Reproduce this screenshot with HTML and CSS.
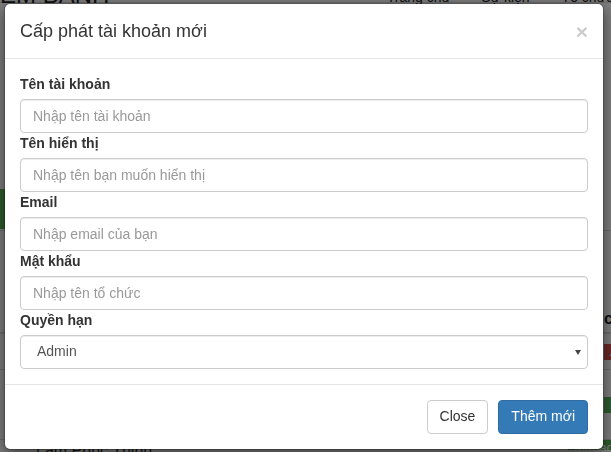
FILE: index.html
```html
<!DOCTYPE html>
<html lang="vi">
<head>
<meta charset="utf-8">
<title>Cấp phát tài khoản mới</title>
<link rel="stylesheet" href="styles.css">
</head>
<body>
<div class="page">
  <header class="navbar">
    <span class="brand">EM BANH</span>
    <nav class="nav">
      <span>Trang chủ</span>
      <span>Sự kiện</span>
      <span>Tổ chức</span>
    </nav>
  </header>
  <main class="content">
    <div class="row row-a"><span class="tag tag-green wide"></span><span></span></div>
    <div class="row row-b"><span></span><span class="th">chức năng</span></div>
    <div class="row row-c"><span></span><span class="tag tag-red">Admin</span></div>
    <div class="row row-d"><span></span><span class="tag tag-green">Manager</span></div>
    <div class="row row-e"><span class="cell-text">Lâm Phúc Thịnh</span><span class="tag tag-green">Manager</span></div>
  </main>
</div>

<div class="backdrop"></div>

<div class="modal">
  <div class="modal-header">
    <h4 class="modal-title">Cấp phát tài khoản mới</h4>
    <button type="button" class="close">×</button>
  </div>
  <form class="modal-body">
    <div class="form-group">
      <label>Tên tài khoản</label>
      <input class="form-control" type="text" placeholder="Nhập tên tài khoản">
    </div>
    <div class="form-group">
      <label>Tên hiển thị</label>
      <input class="form-control" type="text" placeholder="Nhập tên bạn muốn hiển thị">
    </div>
    <div class="form-group">
      <label>Email</label>
      <input class="form-control" type="text" placeholder="Nhập email của bạn">
    </div>
    <div class="form-group">
      <label>Mật khẩu</label>
      <input class="form-control" type="text" placeholder="Nhập tên tổ chức">
    </div>
    <div class="form-group">
      <label>Quyền hạn</label>
      <div class="select-wrap">
        <select class="form-control select">
          <option>Admin</option>
          <option>Manager</option>
        </select>
      </div>
    </div>
  </form>
  <div class="modal-footer">
    <button type="button" class="btn btn-default">Close</button>
    <button type="button" class="btn btn-primary">Thêm mới</button>
  </div>
</div>
</body>
</html>
```

FILE: styles.css
```css
* { box-sizing: border-box; }

html, body {
  margin: 0;
  padding: 0;
  width: 611px;
  height: 452px;
  overflow: hidden;
}

body {
  font-family: "Liberation Sans", Arial, Helvetica, sans-serif;
  font-size: 14px;
  line-height: 1.42857;
  color: #333;
  background: #fff;
  position: relative;
}

/* ---------- background page ---------- */
.page {
  width: 611px;
  height: 452px;
  overflow: hidden;
}

.navbar {
  height: 50px;
  margin-top: -47px;
  background: #f8f8f8;
  border-bottom: 1px solid #d8d8d8;
  display: flex;
  align-items: flex-end;
}

.brand {
  font-size: 24px;
  line-height: 24px;
  margin-bottom: -5px;
  color: #222;
  white-space: nowrap;
}

.nav {
  display: flex;
  gap: 32px;
  margin-left: auto;
  margin-right: -2px;
  font-size: 14px;
  line-height: 20px;
  margin-bottom: -5px;
  color: #222;
  white-space: nowrap;
}

.content {
  display: flex;
  flex-direction: column;
}

.row {
  display: grid;
  grid-template-columns: 604px 1fr;
  align-items: center;
  border-bottom: 1px solid #ddd;
  white-space: nowrap;
}

.row-a { margin-top: 184px; height: 44px; }
.row-b { margin-top: 75px; height: 28px; border-bottom: 2px solid #ddd; }
.row-c { height: 36px; }
.row-d { height: 70px; }
.row-e { height: 52px; align-items: flex-start; }

.th {
  font-weight: bold;
  font-size: 16px;
  color: #222;
}

.tag {
  display: inline-block;
  color: #fff;
  font-size: 13px;
  line-height: 16px;
  padding: 0 6px;
  white-space: nowrap;
}

.tag-green { background: #5cb85c; }
.tag-red { background: #d9534f; }

.wide {
  width: 60px;
  height: 40px;
}

.row-e .tag { margin-left: -36px; height: 10px; }
.cell-text { padding-left: 36px; font-size: 16px; }

.backdrop {
  position: fixed;
  inset: 0;
  background: rgba(0, 0, 0, 0.5);
}

/* ---------- modal ---------- */
.modal {
  position: absolute;
  top: 3px;
  left: 4px;
  width: 600px;
  background: #fff;
  border: 1px solid rgba(0, 0, 0, 0.2);
  border-radius: 6px;
  box-shadow: 0 5px 15px rgba(0, 0, 0, 0.5);
  background-clip: padding-box;
}

.modal-header {
  display: flex;
  align-items: flex-start;
  padding: 15px;
  border-bottom: 1px solid #e5e5e5;
}

.modal-title {
  margin: 0;
  font-size: 18px;
  font-weight: normal;
  line-height: 24px;
  color: #333;
  flex: 1;
}

.close {
  margin: 2px 0 0;
  padding: 0;
  border: 0;
  background: transparent;
  font-family: "Liberation Sans", Arial, sans-serif;
  font-size: 21px;
  font-weight: bold;
  line-height: 1;
  color: #000;
  opacity: 0.2;
  text-shadow: 0 1px 0 #fff;
}

.modal-body {
  margin: 0;
  padding: 15px;
  display: flex;
  flex-direction: column;
}

.form-group label {
  display: block;
  font-weight: bold;
  line-height: 20px;
  margin-bottom: 5px;
  color: #333;
}

.form-control {
  display: block;
  width: 100%;
  height: 34px;
  padding: 6px 12px;
  font-family: "Liberation Sans", Arial, sans-serif;
  font-size: 14px;
  line-height: 1.42857;
  color: #555;
  background: #fff;
  border: 1px solid #ccc;
  border-radius: 4px;
  box-shadow: inset 0 1px 1px rgba(0, 0, 0, 0.075);
  margin: 0;
}

.form-control::placeholder {
  color: #999;
  opacity: 1;
}

.select-wrap {
  position: relative;
}

.select {
  appearance: none;
  -webkit-appearance: none;
  padding-left: 16px;
  color: #555;
}

.select-wrap::after {
  content: "";
  position: absolute;
  right: 7px;
  top: 15px;
  width: 0;
  height: 0;
  border-left: 3.5px solid transparent;
  border-right: 3.5px solid transparent;
  border-top: 5px solid #444;
  pointer-events: none;
}

.modal-footer {
  display: flex;
  justify-content: flex-end;
  gap: 10px;
  padding: 15px;
  border-top: 1px solid #e5e5e5;
}

.btn {
  display: inline-block;
  height: 34px;
  padding: 6px 12px;
  font-family: "Liberation Sans", Arial, sans-serif;
  font-size: 14px;
  line-height: 1.42857;
  border: 1px solid transparent;
  border-radius: 4px;
  margin: 0;
}

.btn-default {
  color: #333;
  background: #fff;
  border-color: #ccc;
}

.btn-primary {
  color: #fff;
  background: #337ab7;
  border-color: #2e6da4;
}
```
